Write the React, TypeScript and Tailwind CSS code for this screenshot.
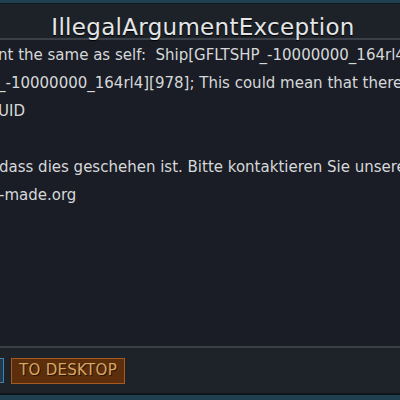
export default function App() {
  const font = { fontFamily: '"DejaVu Sans", "Liberation Sans", sans-serif' }
  return (
    <div className="flex h-[400px] w-[400px] flex-col overflow-hidden bg-[#1a1d25]" style={font}>
      <div className="h-[3px] bg-[#21404f]" />
      <div className="h-[1px] bg-[#10181f]" />
      <div className="flex h-[34px] items-end justify-center bg-[#1d2128] pl-[6px]">
        <h1 className="translate-y-[1px] text-[23px] leading-none tracking-[0.3px] text-[#e4e6e8] [text-shadow:0_1px_1px_#000]">
          IllegalArgumentException
        </h1>
      </div>
      <div className="h-[2px] bg-[#3b3f47]" />
      <div className="flex-1 overflow-hidden whitespace-pre pt-[1px] text-[15px] leading-[28px] text-[#d6d8da]">
        <p className="-ml-[2px]">nt the same as self:  Ship[GFLTSHP_-10000000_164rl4][978]</p>
        <p className="-ml-[2px]">_-10000000_164rl4][978]; This could mean that there</p>
        <p className="-ml-[2px]">UID</p>
        <p> </p>
        <p className="-ml-[1px]">dass dies geschehen ist. Bitte kontaktieren Sie unseren</p>
        <p className="-ml-[1px]">-made.org</p>
      </div>
      <div className="h-[2px] bg-[#3b3f47]" />
      <div className="flex h-[45px] items-center gap-[7px] bg-[#1e232a]">
        <div className="-ml-[20px] h-[25px] w-[24px] border border-[#4a7ea3] bg-[#1e3a50]" />
        <button className="flex h-[26px] items-center border border-[#a65a1f] bg-[#5c2e0c] px-[7px] text-[15px] tracking-[0.3px] text-[#d8a662] [text-shadow:1px_1px_0_#2a1404]">
          TO DESKTOP
        </button>
      </div>
      <div className="h-[2px] bg-[#0e151b]" />
      <div className="h-[5px] bg-[#21404f]" />
    </div>
  )
}
